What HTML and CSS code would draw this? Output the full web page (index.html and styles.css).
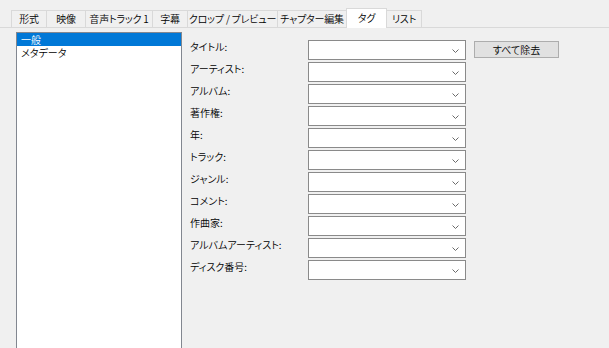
FILE: index.html
```html
<!DOCTYPE html>
<html>
<head>
    <title>タグ</title>
    <link rel="stylesheet" href="styles.css">
</head>
<body>
    <div class="tabs">
        <div class="tab">形式</div>
        <div class="tab">映像</div>
        <div class="tab">音声トラック 1</div>
        <div class="tab">字幕</div>
        <div class="tab">クロップ / プレビュー</div>
        <div class="tab">チャプター編集</div>
        <div class="tab active">タグ</div>
        <div class="tab">リスト</div>
    </div>

    <div class="page">
        <ul class="list">
            <li class="selected">一般</li>
            <li>メタデータ</li>
        </ul>

        <div class="fields">
            <label>タイトル:</label>
            <div class="combo"><svg width="7" height="4" viewBox="0 0 7 4"><polyline points="0.5,0.5 3.5,3.5 6.5,0.5"/></svg></div>
            <button class="clear-btn">すべて除去</button>

            <label>アーティスト:</label>
            <div class="combo"><svg width="7" height="4" viewBox="0 0 7 4"><polyline points="0.5,0.5 3.5,3.5 6.5,0.5"/></svg></div>
            <span></span>

            <label>アルバム:</label>
            <div class="combo"><svg width="7" height="4" viewBox="0 0 7 4"><polyline points="0.5,0.5 3.5,3.5 6.5,0.5"/></svg></div>
            <span></span>

            <label>著作権:</label>
            <div class="combo"><svg width="7" height="4" viewBox="0 0 7 4"><polyline points="0.5,0.5 3.5,3.5 6.5,0.5"/></svg></div>
            <span></span>

            <label>年:</label>
            <div class="combo"><svg width="7" height="4" viewBox="0 0 7 4"><polyline points="0.5,0.5 3.5,3.5 6.5,0.5"/></svg></div>
            <span></span>

            <label>トラック:</label>
            <div class="combo"><svg width="7" height="4" viewBox="0 0 7 4"><polyline points="0.5,0.5 3.5,3.5 6.5,0.5"/></svg></div>
            <span></span>

            <label>ジャンル:</label>
            <div class="combo"><svg width="7" height="4" viewBox="0 0 7 4"><polyline points="0.5,0.5 3.5,3.5 6.5,0.5"/></svg></div>
            <span></span>

            <label>コメント:</label>
            <div class="combo"><svg width="7" height="4" viewBox="0 0 7 4"><polyline points="0.5,0.5 3.5,3.5 6.5,0.5"/></svg></div>
            <span></span>

            <label>作曲家:</label>
            <div class="combo"><svg width="7" height="4" viewBox="0 0 7 4"><polyline points="0.5,0.5 3.5,3.5 6.5,0.5"/></svg></div>
            <span></span>

            <label>アルバムアーティスト:</label>
            <div class="combo"><svg width="7" height="4" viewBox="0 0 7 4"><polyline points="0.5,0.5 3.5,3.5 6.5,0.5"/></svg></div>
            <span></span>

            <label>ディスク番号:</label>
            <div class="combo"><svg width="7" height="4" viewBox="0 0 7 4"><polyline points="0.5,0.5 3.5,3.5 6.5,0.5"/></svg></div>
            <span></span>
        </div>
    </div>
</body>
</html>
```

FILE: styles.css
```css
body {
    margin: 0;
    background-color: #f0f0f0;
    font-family: "Noto Sans CJK JP", "Noto Sans", sans-serif;
    font-size: 10px;
    font-weight: 350;
    font-feature-settings: "palt";
    color: #000;
    overflow: hidden;
}

/* tab strip */
.tabs {
    display: flex;
    align-items: flex-end;
    height: 27px;
    padding-left: 11px;
    border-bottom: 1px solid #d9d9d9;
}

.tab {
    height: 16px;
    line-height: 16px;
    text-align: center;
    border: 1px solid #d9d9d9;
    border-bottom: none;
    margin-right: -1px;
    background-color: #f0f0f0;
    white-space: nowrap;
    letter-spacing: -0.2px;
}

.tab:nth-child(1) { width: 34px; }
.tab:nth-child(2) { width: 38px; }
.tab:nth-child(3) { width: 66px; }
.tab:nth-child(4) { width: 34px; }
.tab:nth-child(5) { width: 89px; }
.tab:nth-child(6) { width: 68px; }
.tab:nth-child(7) { width: 39px; }
.tab:nth-child(8) { width: 34px; }

.tab.active {
    height: 19px;
    line-height: 17px;
    margin-bottom: -1px;
    background-color: #fff;
}

/* tab page */
.page {
    display: flex;
    align-items: flex-start;
    padding: 4px 0 0 16px;
}

.list {
    list-style: none;
    margin: 0;
    padding: 0;
    width: 164px;
    height: 330px;
    border: 1px solid #828790;
    background-color: #fff;
}

.list li {
    height: 13px;
    line-height: 13px;
    padding-left: 4px;
}

.list li.selected {
    background-color: #0078d7;
    color: #fff;
}

.fields {
    display: grid;
    grid-template-columns: 118px 158px 93px;
    grid-auto-rows: 20px;
    row-gap: 2px;
    margin-left: 8px;
    padding-top: 8px;
}

.fields label {
    line-height: 14px;
    white-space: nowrap;
}

.combo {
    box-sizing: border-box;
    height: 20px;
    border: 1px solid #8a8a8a;
    background-color: #fff;
    display: flex;
    align-items: center;
    justify-content: flex-end;
    padding: 1px 6px 0 0;
}

.combo svg polyline {
    fill: none;
    stroke: #6b6b6b;
    stroke-width: 1;
}

.clear-btn {
    box-sizing: border-box;
    width: 85px;
    height: 17px;
    margin: 1px 0 0 8px;
    padding: 0;
    border: 1px solid #adadad;
    background-color: #e1e1e1;
    font-family: inherit;
    font-size: 10px;
    font-weight: 350;
    font-feature-settings: "palt";
    color: #000;
}
```
